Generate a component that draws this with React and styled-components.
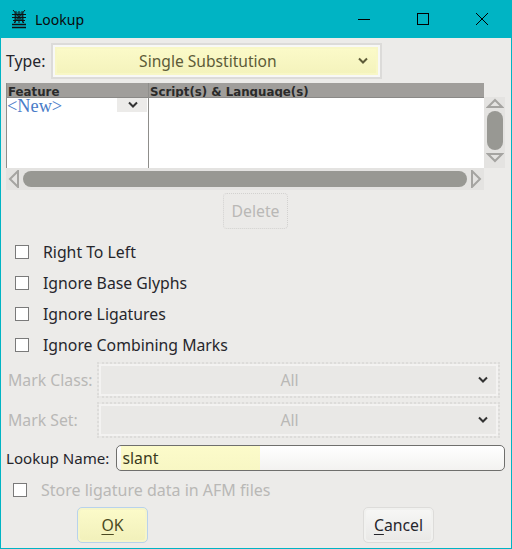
import React from 'react'
import styled, { createGlobalStyle } from 'styled-components'

const GlobalStyle = createGlobalStyle`
  html, body {
    margin: 0;
    padding: 0;
    background: #ecebe9;
  }
`

const Window = styled.div`
  width: 512px;
  height: 549px;
  box-sizing: border-box;
  display: flex;
  flex-direction: column;
  overflow: hidden;
  background: #ecebe9;
  border: 1px solid #00b4c4;
  border-top: none;
  font-family: "Noto Sans", "Liberation Sans", sans-serif;
  font-size: 15.8px;
  color: #2b2b2b;
`

const TitleBar = styled.div`
  height: 38px;
  flex: none;
  display: flex;
  align-items: center;
  background: #00b4c4;
  color: #0a0a0a;
`

const TitleIcon = styled.svg`
  width: 16px;
  height: 19px;
  margin: 0 8px 0 10px;
`

const TitleText = styled.div`
  flex: 1;
  font-size: 14px;
`

const WinButton = styled.div`
  width: 59px;
  height: 38px;
  display: flex;
  align-items: center;
  justify-content: center;
`

const Content = styled.div`
  flex: 1;
  display: flex;
  flex-direction: column;
  padding: 5px 6px 0 5px;
`

const TypeRow = styled.div`
  display: flex;
  align-items: center;
  height: 36px;
  gap: 6px;
`

const FieldLabel = styled.span`
  color: ${p => (p.$disabled ? '#b9b8b6' : '#26262c')};
  white-space: nowrap;
`

const TypeSelect = styled.div`
  width: 331px;
  height: 36px;
  box-sizing: border-box;
  position: relative;
  display: flex;
  align-items: center;
  justify-content: center;
  padding-right: 18px;
  font-size: 15.6px;
  border: 2px solid #dcdbd9;
  background: linear-gradient(#fcfbca, #f3f2ba);
  box-shadow: inset 0 0 0 2px #f8f8f6, inset 0 0 0 4px #f8f7c6;
  color: #5d5b38;
`

const Arrow = styled.svg`
  position: absolute;
  right: ${p => p.$right || 10}px;
  top: 50%;
  margin-top: -4px;
  width: 10px;
  height: 7px;
`

const ListArea = styled.div`
  margin-top: 4px;
  display: grid;
  grid-template-columns: 478px 21px;
  grid-template-rows: 85px 22px;
`

const Table = styled.div`
  display: flex;
  background: #fff;
  overflow: hidden;
`

const Column = styled.div`
  width: ${p => p.$width}px;
  flex: ${p => (p.$grow ? 1 : 'none')};
  box-sizing: border-box;
  display: flex;
  flex-direction: column;
  border-left: ${p => (p.$first ? '1px solid #8f8e8b' : 'none')};
  border-right: ${p => (p.$first ? '1px solid #8f8e8b' : 'none')};
`

const HeaderCell = styled.div`
  height: 15px;
  box-sizing: border-box;
  flex: none;
  overflow: hidden;
  background: #a09e9b;
  border-bottom: 1px solid #8a8987;
  padding-left: 1px;
  font-family: "DejaVu Sans", sans-serif;
  font-weight: bold;
  font-size: 11.8px;
  line-height: 19px;
  color: #2a2a2a;
`

const NewRow = styled.div`
  display: flex;
  justify-content: space-between;
  height: 14px;
  margin-right: 1px;
`

const NewText = styled.span`
  font-family: "Liberation Serif", serif;
  font-size: 18.3px;
  line-height: 16px;
  color: #4a7cc8;
`

const NewArrowBox = styled.span`
  width: 30px;
  background: #ecebe9;
  position: relative;
`

const VScroll = styled.div`
  background: #e4e3e1;
  display: flex;
  flex-direction: column;
  align-items: center;
  height: 71px;
  margin-top: 14px;
`

const HScroll = styled.div`
  background: #e4e3e1;
  display: flex;
  align-items: center;
  height: 22px;
  padding: 0 2px;
  box-sizing: border-box;
  gap: 3px;
`

const Thumb = styled.div`
  background: #989893;
  border-radius: 8px;
  ${p => (p.$vertical ? 'width: 16px; height: 39px;' : 'flex: 1; height: 16px;')}
`

const ScrollArrow = styled.svg`
  flex: none;
  display: block;
`

const DeleteRow = styled.div`
  display: flex;
  justify-content: center;
  margin-top: 3px;
`

const DeleteButton = styled.div`
  width: 65px;
  height: 36px;
  box-sizing: border-box;
  display: flex;
  align-items: center;
  justify-content: center;
  border: 1px dotted #d2d1cf;
  border-radius: 4px;
  color: #b9b8b6;
  background: #ebeae8;
`

const CheckList = styled.div`
  display: flex;
  flex-direction: column;
  margin: 7px 0 2px;
`

const CheckRow = styled.div`
  height: 31px;
  flex: none;
  display: flex;
  align-items: center;
  padding-left: ${p => p.$indent || 9}px;
  gap: 14px;
  color: ${p => (p.$disabled ? '#b9b8b6' : '#26262c')};
`

const StoreRow = styled(CheckRow)`
  margin-top: 3px;
  font-size: 16px;
`

const Box = styled.span`
  width: 14px;
  height: 14px;
  box-sizing: border-box;
  flex: none;
  background: #fff;
  border: 1px solid #7a7a7a;
`

const MarkRow = styled.div`
  display: flex;
  align-items: center;
  height: 36px;
  margin-bottom: 4px;
  padding-left: 2px;
`

const MarkLabel = styled(FieldLabel)`
  width: 89px;
  flex: none;
`

const MarkSelect = styled.div`
  flex: 1;
  height: 36px;
  margin-right: 5px;
  box-sizing: border-box;
  position: relative;
  display: flex;
  align-items: center;
  justify-content: center;
  padding-right: 18px;
  border: 2px dotted #dddcda;
  box-shadow: inset 0 0 0 2px #f3f2f1;
  background: #e9e8e6;
  color: #b9b8b6;
`

const NameRow = styled.div`
  display: flex;
  align-items: center;
  gap: 7px;
  height: 26px;
  margin-top: 3px;
`

const NameLabel = styled(FieldLabel)`
  font-size: 15.1px;
`

const NameInput = styled.div`
  flex: 1;
  height: 26px;
  box-sizing: border-box;
  border: 1px solid #6f6f6d;
  border-radius: 5px;
  display: flex;
  overflow: hidden;
  background: linear-gradient(#fff, #f3f2f0);
`

const NameFill = styled.div`
  width: 138px;
  padding-left: 1px;
  background: linear-gradient(#fcfbca, #f8f7c4);
  color: #3a3a1c;
  line-height: 24px;
  margin-left: 4px;
`

const Footer = styled.div`
  display: flex;
  justify-content: space-between;
  padding: 0 71px 0 71px;
  margin-top: 2px;
`

const DialogButton = styled.div`
  height: 36px;
  width: ${p => p.$width}px;
  box-sizing: border-box;
  display: flex;
  align-items: center;
  justify-content: center;
  border-radius: 5px;
  border: 1px solid ${p => (p.$primary ? '#b8d2ec' : '#dddcda')};
  background: ${p => (p.$primary ? 'linear-gradient(#fcfbca, #f1f0ba)' : 'linear-gradient(#f7f7f6, #e9e8e6)')};
  box-shadow: inset 0 0 0 2px ${p => (p.$primary ? '#f6f5ca' : '#f1f1ef')};
  color: ${p => (p.$primary ? '#4b4a22' : '#26262c')};
  u { text-underline-offset: 3px; }
`

const Chevron = ({ right, color = '#333' }) => (
  <Arrow $right={right} viewBox="0 0 10 7">
    <path d="M1 1.5 L5 5.5 L9 1.5" fill="none" stroke={color} strokeWidth="2" />
  </Arrow>
)

const CheckItem = ({ label }) => (
  <CheckRow>
    <Box />
    <span>{label}</span>
  </CheckRow>
)

export default function App() {
  return (
    <Window>
      <GlobalStyle />
      <TitleBar>
        <TitleIcon viewBox="0 0 16 19">
          <g stroke="#111" strokeWidth="1" fill="none">
            <path d="M2 0 L13 13 M14 0 L3 13 M5 1 L4 13 M8 1 V13 M11 1 L12 13 M1 4.5 H15 M1 7.5 H15 M2 10.5 H14" />
            <path d="M3 3 H13 M3 6 H13 M3 9 H13" stroke="#0a3c44" />
            <path d="M1 14.5 H15 M1 17.5 H15" strokeWidth="1.4" />
          </g>
        </TitleIcon>
        <TitleText>Lookup</TitleText>
        <WinButton>
          <svg width="12" height="12" viewBox="0 0 12 12"><path d="M0 6.5 H12" stroke="#000" /></svg>
        </WinButton>
        <WinButton>
          <svg width="12" height="12" viewBox="0 0 12 12"><rect x=".5" y=".5" width="11" height="11" fill="none" stroke="#000" /></svg>
        </WinButton>
        <WinButton>
          <svg width="12" height="12" viewBox="0 0 12 12"><path d="M0 0 L12 12 M12 0 L0 12" stroke="#000" /></svg>
        </WinButton>
      </TitleBar>
      <Content>
        <TypeRow>
          <FieldLabel>Type:</FieldLabel>
          <TypeSelect>
            Single Substitution
            <Chevron right={12} color="#5d5b38" />
          </TypeSelect>
        </TypeRow>
        <ListArea>
          <Table>
            <Column $first $width={143}>
              <HeaderCell>Feature</HeaderCell>
              <NewRow>
                <NewText>&lt;New&gt;</NewText>
                <NewArrowBox><Chevron right={9} /></NewArrowBox>
              </NewRow>
            </Column>
            <Column $grow>
              <HeaderCell>Script(s) &amp; Language(s)</HeaderCell>
            </Column>
          </Table>
          <VScroll>
            <ScrollArrow width="18" height="14" viewBox="0 0 18 14">
              <path d="M9 3 L16 10 H2 Z" fill="none" stroke="#a5a4a1" strokeWidth="2" />
            </ScrollArrow>
            <Thumb $vertical />
            <ScrollArrow width="18" height="14" viewBox="0 0 18 14">
              <path d="M9 11 L16 4 H2 Z" fill="none" stroke="#a5a4a1" strokeWidth="2" />
            </ScrollArrow>
          </VScroll>
          <HScroll>
            <ScrollArrow width="12" height="18" viewBox="0 0 12 18">
              <path d="M2 9 L10 1 V17 Z" fill="none" stroke="#a5a4a1" strokeWidth="2" />
            </ScrollArrow>
            <Thumb />
            <ScrollArrow width="12" height="18" viewBox="0 0 12 18">
              <path d="M10 9 L2 1 V17 Z" fill="none" stroke="#a5a4a1" strokeWidth="2" />
            </ScrollArrow>
          </HScroll>
        </ListArea>
        <DeleteRow>
          <DeleteButton>Delete</DeleteButton>
        </DeleteRow>
        <CheckList>
          <CheckItem label="Right To Left" />
          <CheckItem label="Ignore Base Glyphs" />
          <CheckItem label="Ignore Ligatures" />
          <CheckItem label="Ignore Combining Marks" />
        </CheckList>
        <MarkRow>
          <MarkLabel $disabled>Mark Class:</MarkLabel>
          <MarkSelect>All<Chevron right={10} /></MarkSelect>
        </MarkRow>
        <MarkRow>
          <MarkLabel $disabled>Mark Set:</MarkLabel>
          <MarkSelect>All<Chevron right={10} /></MarkSelect>
        </MarkRow>
        <NameRow>
          <NameLabel>Lookup Name:</NameLabel>
          <NameInput>
            <NameFill>slant</NameFill>
          </NameInput>
        </NameRow>
        <StoreRow $disabled $indent={7}>
          <Box />
          <span>Store ligature data in AFM files</span>
        </StoreRow>
        <Footer>
          <DialogButton $primary $width={71}><span><u>O</u>K</span></DialogButton>
          <DialogButton $width={71}><span><u>C</u>ancel</span></DialogButton>
        </Footer>
      </Content>
    </Window>
  )
}
